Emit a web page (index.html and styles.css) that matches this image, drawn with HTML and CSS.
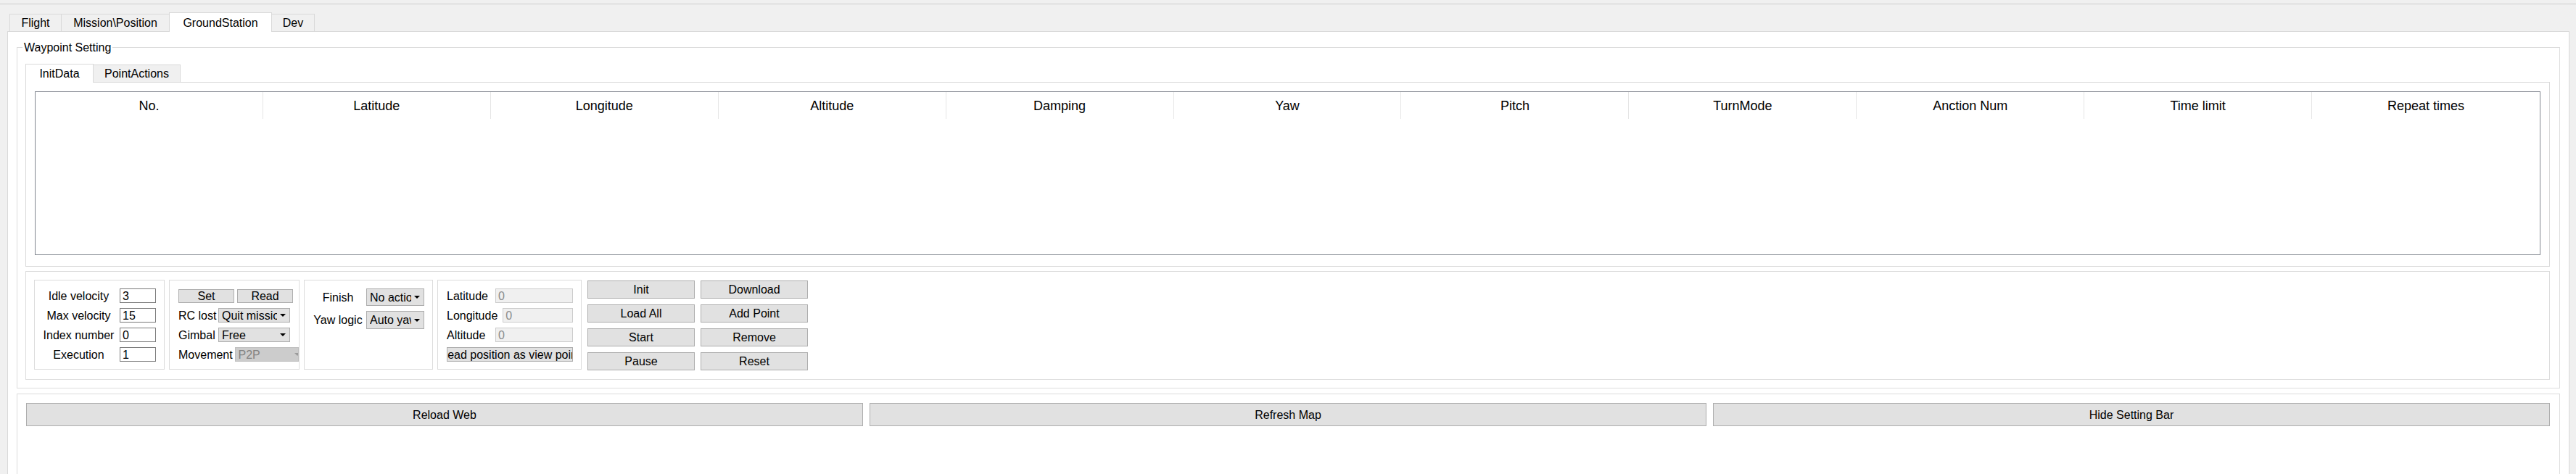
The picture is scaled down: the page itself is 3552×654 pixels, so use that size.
FILE: index.html
```html
<!DOCTYPE html>
<html>
<head>
<meta charset="utf-8">
<title>GroundStation</title>
<link rel="stylesheet" href="styles.css">
</head>
<body>
<div class="topbar"></div>
<div class="tabs outer-tabs">
  <div class="tab t-flight">Flight</div>
  <div class="tab t-mission">Mission\Position</div>
  <div class="tab t-ground active">GroundStation</div>
  <div class="tab t-dev">Dev</div>
</div>
<div class="pane">
  <div class="group waypoint">
    <div class="group-title">Waypoint Setting</div>
    <div class="tabs inner-tabs">
      <div class="tab t-init active">InitData</div>
      <div class="tab t-actions">PointActions</div>
    </div>
    <div class="inner-pane">
      <div class="table">
        <div class="thead">
          <div class="th">No.</div>
          <div class="th">Latitude</div>
          <div class="th">Longitude</div>
          <div class="th">Altitude</div>
          <div class="th">Damping</div>
          <div class="th">Yaw</div>
          <div class="th">Pitch</div>
          <div class="th">TurnMode</div>
          <div class="th">Anction Num</div>
          <div class="th">Time limit</div>
          <div class="th">Repeat times</div>
        </div>
      </div>
    </div>
    <div class="frame">
      <div class="box box-vel">
        <div class="lbl-c">Idle velocity</div><div class="input">3</div>
        <div class="lbl-c">Max velocity</div><div class="input">15</div>
        <div class="lbl-c">Index number</div><div class="input">0</div>
        <div class="lbl-c">Execution</div><div class="input">1</div>
      </div>
      <div class="box box-rc">
        <div class="rc-btns">
          <div class="btn small-btn">Set</div>
          <div class="btn small-btn">Read</div>
        </div>
        <div class="rc-grid">
          <div class="lbl">RC lost</div>
          <div class="combo"><span class="combo-text">Quit mission</span></div>
          <div class="lbl">Gimbal</div>
          <div class="combo"><span class="combo-text">Free</span></div>
        </div>
        <div class="move-row">
          <div class="lbl">Movement</div>
          <div class="combo disabled"><span class="combo-text">P2P</span></div>
        </div>
      </div>
      <div class="box box-finish">
        <div class="lbl-c">Finish</div>
        <div class="combo tall"><span class="combo-text">No action</span></div>
        <div class="lbl-c">Yaw logic</div>
        <div class="combo tall tall2"><span class="combo-text">Auto yaw</span></div>
      </div>
      <div class="box box-pos">
        <div class="pos-row"><div class="pos-label">Latitude</div><div class="input off">0</div></div>
        <div class="pos-row"><div class="pos-label long">Longitude</div><div class="input off">0</div></div>
        <div class="pos-row"><div class="pos-label">Altitude</div><div class="input off">0</div></div>
        <div class="btn read-btn"><span>Read position as view point</span></div>
      </div>
      <div class="btn-grid">
        <div class="btn">Init</div>
        <div class="btn">Download</div>
        <div class="btn">Load All</div>
        <div class="btn">Add Point</div>
        <div class="btn">Start</div>
        <div class="btn">Remove</div>
        <div class="btn">Pause</div>
        <div class="btn">Reset</div>
      </div>
    </div>
  </div>
  <div class="group bottom-group">
    <div class="wide-btns">
      <div class="btn wide">Reload Web</div>
      <div class="btn wide">Refresh Map</div>
      <div class="btn wide">Hide Setting Bar</div>
    </div>
  </div>
</div>
</body>
</html>
```

FILE: styles.css
```css
* { box-sizing: border-box; }

html, body {
  height: 654px;
  overflow: hidden;
}

body {
  margin: 0;
  background: #f0f0f0;
  font-family: "Liberation Sans", Arial, sans-serif;
  font-size: 16px;
  color: #000;
}

.topbar {
  height: 6px;
  border-bottom: 1px solid #cccccc;
}

/* ---------- tabs ---------- */
.tabs {
  display: flex;
  align-items: flex-end;
}

.outer-tabs {
  height: 26px;
  margin: 11px 0 0 13px;
}

.tab {
  height: 24px;
  border: 1px solid #d9d9d9;
  border-bottom: none;
  background: #f0f0f0;
  display: flex;
  align-items: center;
  justify-content: center;
  white-space: nowrap;
  padding-top: 1px;
}

.tab + .tab { margin-left: -1px; }

.tab.active {
  height: 27px;
  margin-bottom: -1px;
  background: #fff;
  position: relative;
  z-index: 1;
}

.t-flight { width: 72px; }
.t-mission { width: 150px; }
.t-ground { width: 142px; }
.t-dev { width: 60px; }

.inner-tabs { height: 25px; }
.inner-tabs .tab.active { height: 26px; }
.t-init { width: 94px; }
.t-actions { width: 121px; }

/* ---------- pane ---------- */
.pane {
  margin: 0 9px 0 10px;
  height: 611px;
  overflow: hidden;
  border: 1px solid #d9d9d9;
  border-bottom: none;
  background: #fff;
  padding: 21px 12px 0 12px;
}

.group {
  position: relative;
  border: 1px solid #dcdcdc;
}

.waypoint {
  padding: 22px 13px 11px 11px;
}

.group-title {
  position: absolute;
  top: -9px;
  left: 7px;
  padding: 0 2px;
  line-height: 18px;
  background: #fff;
}

.inner-pane {
  border: 1px solid #d9d9d9;
  padding: 12px 12px 15px 12px;
}

.table {
  height: 226px;
  border: 1px solid #828790;
  background: #fff;
}

.thead {
  display: grid;
  grid-template-columns: repeat(11, 1fr);
  height: 37px;
}

.th {
  border-right: 1px solid #e5e5e5;
  display: flex;
  align-items: center;
  justify-content: center;
  font-size: 18px;
  white-space: nowrap;
  padding-top: 2px;
}

.th:last-child { border-right: none; }

/* ---------- controls frame ---------- */
.frame {
  margin-top: 6px;
  border: 1px solid #dcdcdc;
  padding: 11px 11px 12px 11px;
  display: flex;
  gap: 6px;
  align-items: flex-start;
}

.box {
  height: 124px;
  border: 1px solid #dcdcdc;
}

.lbl-c {
  text-align: center;
  line-height: 21px;
  white-space: nowrap;
}

.lbl {
  line-height: 21px;
  white-space: nowrap;
}

.input {
  height: 20px;
  border: 1px solid #7a7a7a;
  background: #fff;
  padding-left: 3px;
  line-height: 19px;
  white-space: nowrap;
  overflow: hidden;
}

.input.off {
  border-color: #cccccc;
  background: #f0f0f0;
  color: #8c8c8c;
}

.btn {
  background: #e1e1e1;
  border: 1px solid #adadad;
  display: flex;
  align-items: center;
  justify-content: center;
  white-space: nowrap;
  padding-top: 1px;
}

/* box 1 */
.box-vel {
  width: 180px;
  padding: 11px 11px 0 6px;
  display: grid;
  grid-template-columns: 109px 50px;
  grid-auto-rows: 20px;
  column-gap: 2px;
  row-gap: 7px;
  align-content: start;
}

/* box 2 */
.box-rc {
  width: 180px;
  padding: 12px 0 0 12px;
  display: flex;
  flex-direction: column;
  gap: 7px;
}

.rc-btns {
  display: flex;
  gap: 4px;
}

.small-btn {
  width: 77px;
  height: 19px;
}

.rc-grid {
  display: grid;
  grid-template-columns: 55px 99px;
  grid-auto-rows: 20px;
  row-gap: 7px;
}

.move-row {
  display: flex;
  height: 20px;
}

.move-row .lbl { width: 78px; }

.combo {
  position: relative;
  height: 20px;
  background: #e1e1e1;
  border: 1px solid #adadad;
  padding-left: 4px;
  padding-top: 1px;
  display: flex;
  align-items: center;
  overflow: hidden;
}

.combo::after {
  content: "";
  position: absolute;
  right: 5px;
  top: 50%;
  margin-top: -2px;
  border-left: 4px solid transparent;
  border-right: 4px solid transparent;
  border-top: 4px solid #000;
}

.combo-text {
  display: block;
  overflow: hidden;
  white-space: nowrap;
  margin-right: 17px;
  flex: 1;
}

.combo.disabled {
  width: 89px;
  background: #cccccc;
  border-color: #bfbfbf;
  color: #838383;
}

.combo.disabled::after {
  right: -3px;
  border-top-color: #9a9a9a;
}

/* box 3 */
.box-finish {
  width: 178px;
  padding: 11px 11px 0 8px;
  display: grid;
  grid-template-columns: 76px 80px;
  grid-template-rows: 24px 25px;
  column-gap: 1px;
  row-gap: 7px;
  align-content: start;
}

.box-finish .lbl-c { line-height: 25px; }

.combo.tall { height: 24px; }
.combo.tall2 { height: 25px; }

/* box 4 */
.box-pos {
  width: 199px;
  padding: 11px 11px 0 12px;
  display: flex;
  flex-direction: column;
  gap: 7px;
}

.pos-row {
  display: flex;
  height: 20px;
  align-items: center;
}

.pos-label {
  min-width: 67px;
  white-space: nowrap;
  padding-top: 1px;
}

.pos-label.long { margin-right: 7px; }

.pos-row .input { flex: 1; }

.read-btn {
  height: 20px;
  overflow: hidden;
  justify-content: center;
}

.read-btn span { flex: none; }

/* button grid */
.btn-grid {
  margin: 1px 0 0 2px;
  display: grid;
  grid-template-columns: 148px 148px;
  grid-auto-rows: 25px;
  column-gap: 8px;
  row-gap: 8px;
}

/* ---------- bottom group ---------- */
.bottom-group {
  margin-top: 7px;
  padding: 12px 13px 0 12px;
  height: 140px;
}

.wide-btns {
  display: grid;
  grid-template-columns: 1fr 1fr 1fr;
  column-gap: 9px;
}

.btn.wide { height: 32px; }
```
